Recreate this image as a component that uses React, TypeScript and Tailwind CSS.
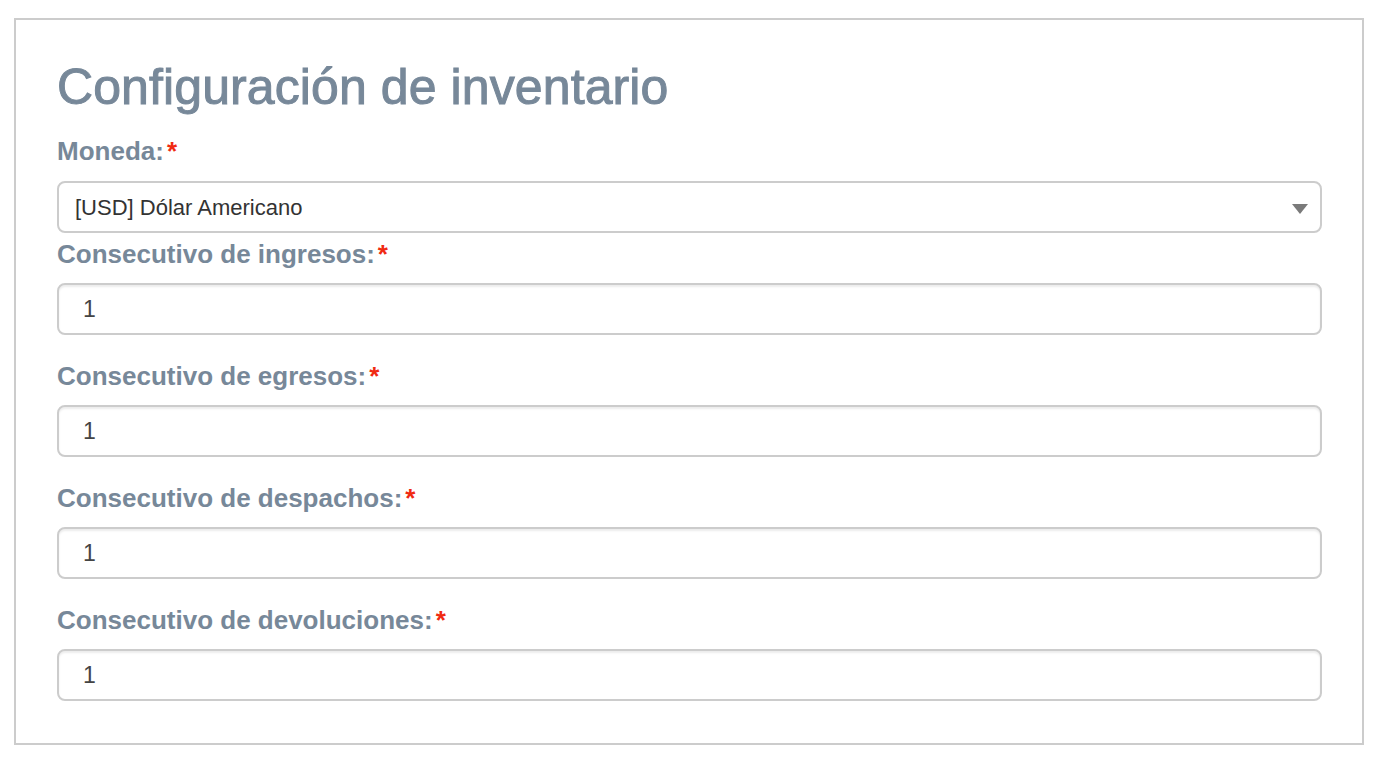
const fields = [
  'Consecutivo de ingresos:',
  'Consecutivo de egresos:',
  'Consecutivo de despachos:',
  'Consecutivo de devoluciones:',
]

function Label({ text }: { text: string }) {
  return (
    <label className="block h-[31px] pt-[2px] text-[26px] leading-[31px] font-bold text-[#778899]">
      {text}
      <span className="ml-[3px] text-[#f02a12]">*</span>
    </label>
  )
}

export default function App() {
  return (
    <div className="min-h-screen bg-white pt-[18px] pl-[14px] font-['Liberation_Sans',Arial,sans-serif]">
      <div className="w-[1350px] border-2 border-[#cccccc] pl-[41px] pr-[40px] pt-[40px] pb-[42px]">
        <h1 className="text-[50px] leading-[55px] font-normal tracking-[0.1px] text-[#778899] [-webkit-text-stroke:1px_#778899]">
          Configuración de inventario
        </h1>

        <div className="mt-[19px]">
          <Label text="Moneda:" />
          <div className="relative mt-[16px] mb-[4px] flex h-[52px] items-center rounded-[8px] border-2 border-[#cccccc] bg-white pl-[16px]">
            <span className="text-[22px] text-[#333333]">[USD] Dólar Americano</span>
            <svg
              className="absolute right-[12px] top-[21px]"
              width="16"
              height="10"
              viewBox="0 0 16 10"
            >
              <path d="M0 0 H16 L8 10 Z" fill="#7a7a7a" />
            </svg>
          </div>
        </div>

        {fields.map((f, i) => (
          <div key={f} className={i < fields.length - 1 ? 'mb-[24px]' : ''}>
            <Label text={f} />
            <div className="mt-[15px] flex h-[52px] items-center rounded-[8px] border-2 border-[#cccccc] bg-white pl-[24px] shadow-[inset_0_2px_2px_rgba(0,0,0,0.075)]">
              <span className="text-[23px] text-[#444444]">1</span>
            </div>
          </div>
        ))}
      </div>
    </div>
  )
}
